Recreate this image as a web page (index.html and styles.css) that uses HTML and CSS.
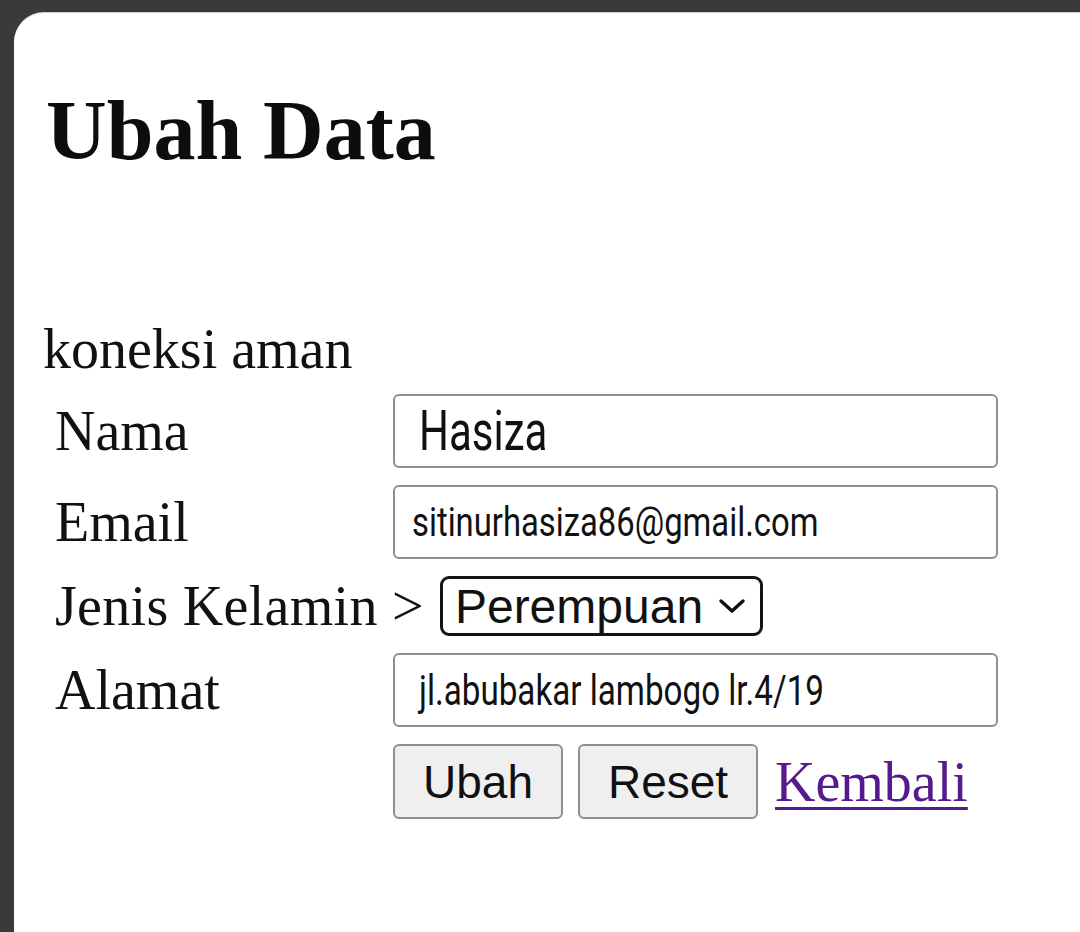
FILE: index.html
```html
<!DOCTYPE html>
<html lang="id">
<head>
<meta charset="utf-8">
<title>Ubah Data</title>
<link rel="stylesheet" href="styles.css">
</head>
<body>
<div class="panel">
  <h1 class="title">Ubah Data</h1>
  <p class="status">koneksi aman</p>
  <form class="form">
    <div class="label">Nama</div>
    <div class="field"><span class="val val-big">Hasiza</span></div>
    <div class="label">Email</div>
    <div class="field"><span class="val val-email">sitinurhasiza86@gmail.com</span></div>
    <div class="label span2">Jenis Kelamin &gt; <span class="select"><span class="select-text">Perempuan</span><svg class="chev" width="28" height="16" viewBox="0 0 28 16"><path d="M3 3 L14 13 L25 3" fill="none" stroke="#111" stroke-width="3.5" stroke-linecap="round" stroke-linejoin="round"/></svg></span></div>
    <div class="label">Alamat</div>
    <div class="field"><span class="val val-addr">jl.abubakar lambogo lr.4/19</span></div>
    <div class="label"></div>
    <div class="actions">
      <button type="button" class="btn btn-ubah">Ubah</button>
      <button type="button" class="btn btn-reset">Reset</button>
      <a href="#" class="back">Kembali</a>
    </div>
  </form>
</div>
</body>
</html>
```
FILE: styles.css
```css
html, body {
  margin: 0;
  padding: 0;
}
body {
  background: #3a3a3a;
  width: 1080px;
  height: 932px;
  overflow: hidden;
}
.panel {
  margin: 13px 0 0 14px;
  height: 919px;
  background: #ffffff;
  border-top-left-radius: 30px;
  box-shadow: 0 -1px 0 #cfcfcf;
  padding: 76px 0 0 29px;
  box-sizing: border-box;
  font-family: "Liberation Serif", "Times New Roman", serif;
  color: #111;
}
.title {
  margin: 0;
  padding-left: 3px;
  font-size: 84px;
  line-height: 84px;
  font-weight: bold;
  color: #0d0d0d;
}
.status {
  margin: 148px 0 0 0;
  font-size: 56px;
  line-height: 56px;
}
.form {
  margin: 17px 0 0 12px;
  display: grid;
  grid-template-columns: 338px 605px;
  row-gap: 17px;
  align-items: center;
}
.label {
  font-size: 56px;
  line-height: 56px;
  white-space: nowrap;
}
.span2 {
  grid-column: 1 / 3;
  display: flex;
  align-items: center;
  gap: 16px;
  letter-spacing: 0.3px;
}
.field {
  height: 74px;
  border: 2px solid #8e8e8e;
  border-radius: 6px;
  box-sizing: border-box;
  display: flex;
  align-items: center;
  padding-left: 20px;
  overflow: hidden;
}
.val {
  display: inline-block;
  font-family: Roboto, "Liberation Sans", sans-serif;
  color: #111;
  transform-origin: left center;
  white-space: nowrap;
}
.val-big {
  font-size: 56px;
  transform: scaleX(0.75);
  margin-left: 4px;
}
.val-email {
  font-size: 41px;
  transform: scaleX(0.8);
  margin-left: -3px;
}
.val-addr {
  font-size: 42px;
  transform: scaleX(0.79);
  margin-left: 4px;
}
.select {
  display: inline-flex;
  align-items: center;
  width: 323px;
  height: 60px;
  box-sizing: border-box;
  border: 3.5px solid #141414;
  border-radius: 9px;
  padding: 0 14px 0 12px;
  justify-content: space-between;
  font-family: "Liberation Sans", Arial, sans-serif;
  font-size: 48px;
  line-height: 1;
  letter-spacing: 0;
  color: #111;
}
.select-text {
  margin-top: 2px;
}
.chev {
  display: block;
}
.actions {
  display: flex;
  align-items: center;
  height: 75px;
}
.btn {
  height: 75px;
  box-sizing: border-box;
  background: #efefef;
  border: 2px solid #8e8e8e;
  border-radius: 6px;
  font-family: "Liberation Sans", Arial, sans-serif;
  font-size: 46px;
  color: #111;
  padding: 0;
  margin: 0;
}
.btn-ubah {
  width: 170px;
}
.btn-reset {
  width: 180px;
  margin-left: 15px;
}
.back {
  margin-left: 17px;
  font-size: 56px;
  line-height: 56px;
  color: #551a8b;
  text-decoration: underline;
  text-decoration-thickness: 3px;
  text-underline-offset: 6px;
}
```
